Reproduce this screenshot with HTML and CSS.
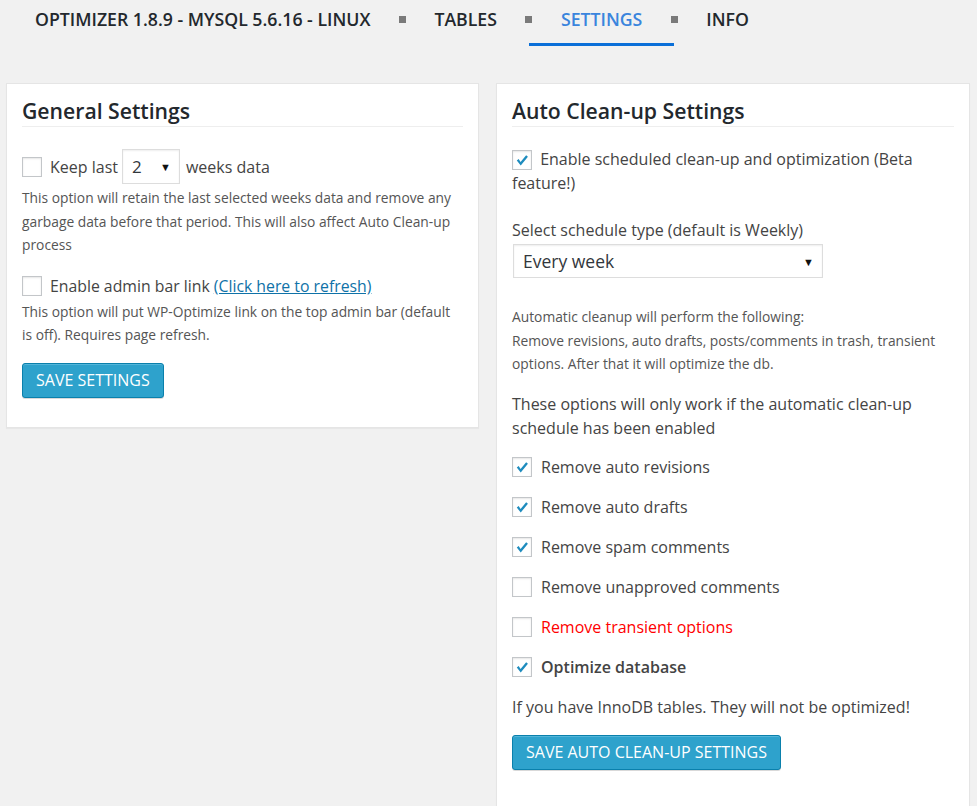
FILE: index.html
```html
<!DOCTYPE html>
<html>
<head>
<meta charset="utf-8">
<link rel="stylesheet" href="styles.css">
</head>
<body>
<nav class="tabs">
  <a class="tab">OPTIMIZER 1.8.9 - MYSQL 5.6.16 - LINUX</a>
  <span class="sep"></span>
  <a class="tab">TABLES</a>
  <span class="sep"></span>
  <a class="tab active">SETTINGS</a>
  <span class="sep"></span>
  <a class="tab">INFO</a>
</nav>
<main class="cols">
  <section class="card card-left">
    <h2 class="card-title">General Settings</h2>
    <div class="row-keep">
      <span class="cb"></span>
      <span class="lbl">Keep last</span>
      <span class="select select-small"><span>2</span><span class="arrow">▼</span></span>
      <span class="lbl">weeks data</span>
    </div>
    <p class="desc">This option will retain the last selected weeks data and remove any garbage data before that period. This will also affect Auto Clean-up process</p>
    <div class="row-admin">
      <span class="cb"></span>
      <span class="lbl">Enable admin bar link <a class="link">(Click here to refresh)</a></span>
    </div>
    <p class="desc">This option will put WP-Optimize link on the top admin bar (default is off). Requires page refresh.</p>
    <button class="btn">SAVE SETTINGS</button>
  </section>
  <section class="card card-right">
    <h2 class="card-title">Auto Clean-up Settings</h2>
    <p class="text enable"><span class="cb checked inline"><svg viewBox="0 0 20 20"><path d="M4.2 10.6 L6.3 8.9 L8.4 12.2 L14.6 4.6 L16.6 6.3 L8.6 16.2 Z"/></svg></span> Enable scheduled clean-up and optimization (Beta feature!)</p>
    <p class="text sched">Select schedule type (default is Weekly)</p>
    <span class="select select-wide"><span>Every week</span><span class="arrow">▼</span></span>
    <p class="desc auto">Automatic cleanup will perform the following:<br>Remove revisions, auto drafts, posts/comments in trash, transient options. After that it will optimize the db.</p>
    <p class="text only">These options will only work if the automatic clean-up schedule has been enabled</p>
    <ul class="opts">
      <li><span class="cb checked"><svg viewBox="0 0 20 20"><path d="M4.2 10.6 L6.3 8.9 L8.4 12.2 L14.6 4.6 L16.6 6.3 L8.6 16.2 Z"/></svg></span><span class="lbl">Remove auto revisions</span></li>
      <li><span class="cb checked"><svg viewBox="0 0 20 20"><path d="M4.2 10.6 L6.3 8.9 L8.4 12.2 L14.6 4.6 L16.6 6.3 L8.6 16.2 Z"/></svg></span><span class="lbl">Remove auto drafts</span></li>
      <li><span class="cb checked"><svg viewBox="0 0 20 20"><path d="M4.2 10.6 L6.3 8.9 L8.4 12.2 L14.6 4.6 L16.6 6.3 L8.6 16.2 Z"/></svg></span><span class="lbl">Remove spam comments</span></li>
      <li><span class="cb"></span><span class="lbl">Remove unapproved comments</span></li>
      <li><span class="cb"></span><span class="lbl red">Remove transient options</span></li>
      <li><span class="cb checked"><svg viewBox="0 0 20 20"><path d="M4.2 10.6 L6.3 8.9 L8.4 12.2 L14.6 4.6 L16.6 6.3 L8.6 16.2 Z"/></svg></span><span class="lbl bold">Optimize database</span></li>
    </ul>
    <p class="text inno">If you have InnoDB tables. They will not be optimized!</p>
    <button class="btn">SAVE AUTO CLEAN-UP SETTINGS</button>
  </section>
</main>
</body>
</html>
```
FILE: styles.css
```css
* { box-sizing: border-box; }
html, body { margin: 0; padding: 0; }
body {
  background: #f1f1f1;
  font-family: "Open Sans", "Noto Sans", sans-serif;
  color: #444;
  width: 977px;
  height: 806px;
  overflow: hidden;
}
.tabs {
  display: flex;
  align-items: stretch;
  height: 46px;
  padding-left: 3px;
}
.tab {
  display: flex;
  align-items: center;
  padding: 0 32px 5px;
  font-size: 17.7px;
  font-weight: 600;
  color: #23282d;
  border-bottom: 3px solid transparent;
  text-decoration: none;
}
.tab.active {
  color: #3a85dd;
  border-bottom-color: #0a6fd8;
}
.sep {
  width: 0;
  display: flex;
  align-items: center;
  justify-content: center;
  padding-bottom: 8px;
}
.sep::before {
  content: "";
  flex: none;
  width: 7px;
  height: 7px;
  background: #7a7a7a;
}
.cols {
  display: flex;
  align-items: flex-start;
  gap: 17px;
  padding: 37px 7px 0 6px;
}
.card {
  background: #fff;
  border: 1px solid #e5e5e5;
  box-shadow: 0 1px 1px rgba(0,0,0,.04);
  padding: 12px 15px 0;
}
.card-left { width: 473px; padding-bottom: 29px; }
.card-right { width: 474px; height: 730px; }
.card-title {
  margin: 0 0 0;
  font-size: 21.2px;
  font-weight: 600;
  color: #23282d;
  line-height: 29px;
  padding-bottom: 1px;
  border-bottom: 1px solid #eee;
}
.cb {
  display: inline-flex;
  flex: none;
  width: 20px;
  height: 20px;
  border: 1px solid #c3c6c9;
  background: #fff;
  box-shadow: inset 0 1px 2px rgba(0,0,0,.1);
  align-items: center;
  justify-content: center;
}
.cb svg { width: 18px; height: 18px; fill: #1e8cbe; }
.lbl { font-size: 16px; color: #444; }
.row-keep {
  display: flex;
  align-items: center;
  margin-top: 22px;
  height: 35px;
}
.row-keep .cb { margin-right: 8px; }
.row-keep .select-small { margin: 0 6px 0 4px; }
.select {
  display: inline-flex;
  align-items: center;
  justify-content: space-between;
  background: #fff;
  border: 1px solid #ddd;
  box-shadow: inset 0 1px 2px rgba(0,0,0,.07);
  color: #32373c;
  font-size: 17px;
}
.select-small { width: 58px; height: 35px; padding: 0 8px 0 9px; }
.select-wide { width: 310px; height: 34px; padding: 0 8px 0 9px; margin: 2px 0 0 1px; font-size: 17.5px; }
.arrow { font-size: 11px; color: #111; }
.desc {
  margin: 2px 0 0;
  font-size: 13.8px;
  line-height: 23.5px;
  color: #555;
}
.row-admin {
  display: flex;
  align-items: center;
  margin-top: 19px;
  height: 20px;
}
.row-admin .cb { margin-right: 8px; }
.row-admin .lbl { font-size: 15.8px; }
.link { color: #0f72a8; text-decoration: underline; }
.row-admin + .desc { margin-top: 4px; }
.btn {
  display: block;
  margin-top: 16px;
  height: 35px;
  padding: 0 13px;
  background: #2ea2cc;
  border: 1px solid #0a80ac;
  border-radius: 3px;
  box-shadow: inset 0 1px 0 rgba(120,200,230,.5), 0 1px 0 rgba(0,0,0,.15);
  color: #fff;
  font-family: inherit;
  font-size: 16px;
}
.text {
  margin: 0;
  font-size: 16px;
  line-height: 24px;
  color: #444;
}
.cb.inline { vertical-align: -4px; margin-right: 4px; }
.enable { margin-top: 20px; }
.sched { margin-top: 23px; }
.desc.auto { margin-top: 27px; }
.only { margin-top: 16px; }
.opts {
  list-style: none;
  margin: 7px 0 0;
  padding: 0;
}
.opts li {
  display: flex;
  align-items: center;
  height: 40px;
}
.opts .cb { margin-right: 9px; }
.red { color: #f00; }
.bold { font-weight: 600; }
.inno { margin-top: 8px; }
.card-right .btn { margin-top: 16px; }
```
